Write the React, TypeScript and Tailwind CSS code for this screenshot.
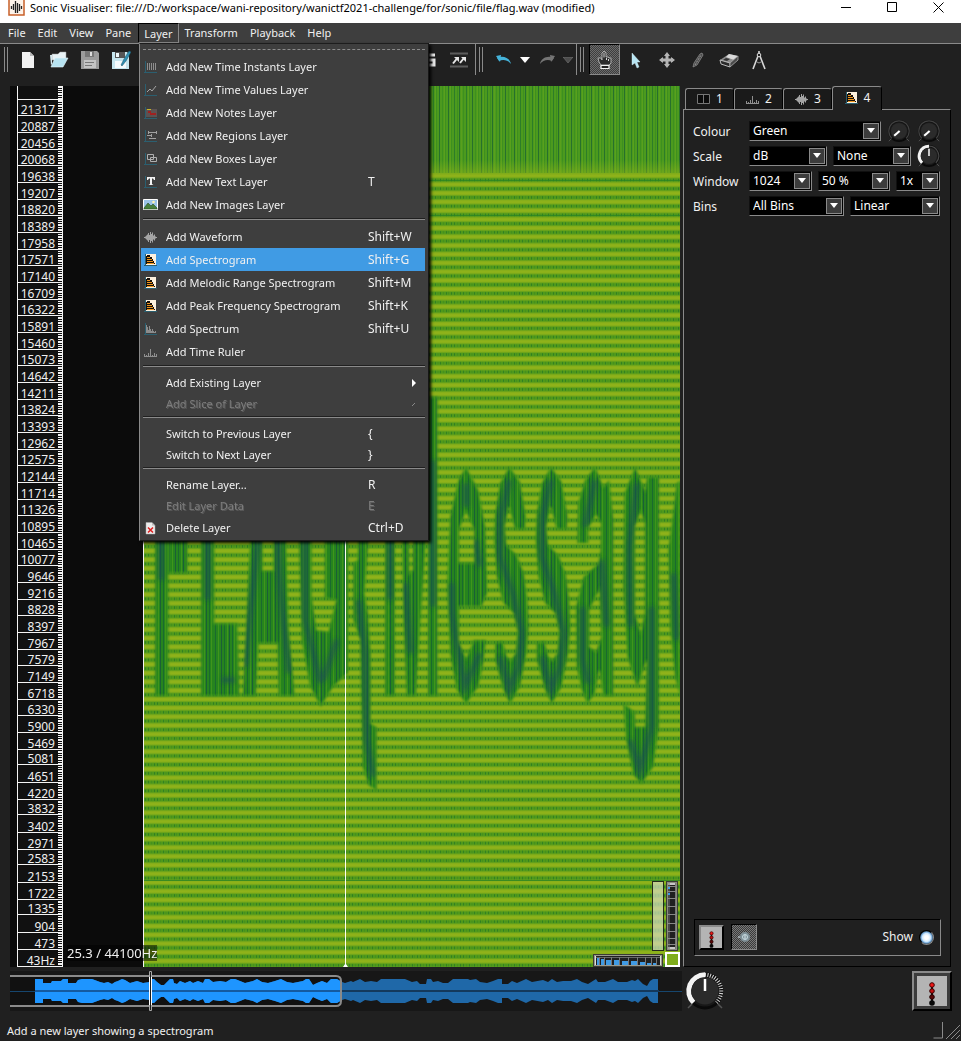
import React from "react";

/* ---------- data ---------- */

const frequencies = [
  21317, 20887, 20456, 20068, 19638, 19207, 18820, 18389, 17958, 17571, 17140, 16709, 16322, 15891, 15460, 15073,
  14642, 14211, 13824, 13393, 12962, 12575, 12144, 11714, 11326, 10895, 10465, 10077, 9646, 9216, 8828, 8397, 7967,
  7579, 7149, 6718, 6330, 5900, 5469, 5081, 4651, 4220, 3832, 3402, 2971, 2583, 2153, 1722, 1335, 904, 473, 43,
];

const envelope: [number, number][] = [
  [35, 12], [43, 12], [43, 8], [51, 8], [52, 10], [61, 10], [63, 12], [68, 12], [68, 8], [76, 8], [78, 11], [82, 12], [92, 12],
  [100, 9], [104, 8], [108, 9], [112, 7], [115, 9], [118, 10], [122, 12], [125, 11], [130, 8], [137, 10], [143, 8], [150, 9],
  [152, 12], [154, 12], [157, 9], [161, 6], [164, 6], [167, 9], [170, 12], [173, 12], [174, 8], [177, 7], [180, 10], [185, 8],
  [190, 10], [193, 8], [198, 10], [203, 8], [205, 12], [209, 12], [213, 9], [220, 10], [226, 9], [231, 12], [235, 12],
  [240, 10], [245, 8], [253, 10], [257, 12], [262, 9], [268, 8], [275, 10], [281, 12], [287, 9], [293, 8], [303, 10],
  [306, 12], [309, 12], [313, 6], [317, 8], [322, 10], [327, 8], [331, 12], [337, 12], [342, 9], [345, 8], [351, 10],
  [353, 9], [360, 12], [365, 9], [371, 10], [377, 9], [381, 12], [405, 12], [412, 9], [417, 10], [420, 7], [426, 7],
  [427, 12], [431, 12], [433, 9], [438, 10], [443, 8], [448, 8], [453, 12], [468, 12], [470, 11], [476, 12], [480, 9],
  [487, 8], [493, 10], [498, 12], [502, 12], [502, 7], [508, 7], [512, 10], [517, 8], [526, 12], [532, 9], [543, 11],
  [548, 9], [552, 12], [557, 9], [563, 10], [571, 10], [577, 12], [582, 9], [588, 7], [596, 12], [598, 9], [605, 9],
  [613, 12], [618, 9], [627, 9], [632, 11], [635, 10], [638, 12], [643, 7], [647, 5], [650, 10], [653, 12], [658, 12],
];

const wavePoints = [
  ...envelope.map(([x, h]) => `${x - 10},${20 - h}`),
  ...[...envelope].reverse().map(([x, h]) => `${x - 10},${20 + h}`),
].join(" ");

type IconName =
  | "instants" | "values" | "notes" | "regions" | "boxes" | "text" | "images"
  | "waveform" | "spectrogram" | "spectrum" | "ruler" | "delete";

type Entry =
  | "-"
  | { label: string; icon?: IconName; keys?: string; active?: boolean; disabled?: boolean; sub?: boolean };

const layerMenu: Entry[] = [
  { label: "Add New Time Instants Layer", icon: "instants" },
  { label: "Add New Time Values Layer", icon: "values" },
  { label: "Add New Notes Layer", icon: "notes" },
  { label: "Add New Regions Layer", icon: "regions" },
  { label: "Add New Boxes Layer", icon: "boxes" },
  { label: "Add New Text Layer", icon: "text", keys: "T" },
  { label: "Add New Images Layer", icon: "images" },
  "-",
  { label: "Add Waveform", icon: "waveform", keys: "Shift+W" },
  { label: "Add Spectrogram", icon: "spectrogram", keys: "Shift+G", active: true },
  { label: "Add Melodic Range Spectrogram", icon: "spectrogram", keys: "Shift+M" },
  { label: "Add Peak Frequency Spectrogram", icon: "spectrogram", keys: "Shift+K" },
  { label: "Add Spectrum", icon: "spectrum", keys: "Shift+U" },
  { label: "Add Time Ruler", icon: "ruler" },
  "-",
  { label: "Add Existing Layer", sub: true },
  { label: "Add Slice of Layer", sub: true, disabled: true },
  "-",
  { label: "Switch to Previous Layer", keys: "{" },
  { label: "Switch to Next Layer", keys: "}" },
  "-",
  { label: "Rename Layer...", keys: "R" },
  { label: "Edit Layer Data", keys: "E", disabled: true },
  { label: "Delete Layer", icon: "delete", keys: "Ctrl+D" },
];

/* ---------- icons ---------- */

const Axes = () => <path d="M2.5 2v12M1 13.5h13" stroke="#2b5f70" fill="none" />;

function LayerIcon({ name }: { name: IconName }) {
  return (
    <svg width="16" height="16" viewBox="0 0 16 16" className="shrink-0" aria-hidden="true">
      {name === "instants" && (
        <>
          <Axes />
          <path d="M4.500 4v7M6.500 4v7M8.500 4v7M10.500 4v7M12.500 4v7" stroke="#8d8d8d" />
        </>
      )}
      {name === "values" && (
        <>
          <Axes />
          <path d="M4 10l3-3 2 2 4-5" stroke="#a5a5a5" fill="none" />
        </>
      )}
      {name === "notes" && (
        <>
          <Axes />
          <path d="M3 4h11v8H3z" fill="#5c5252" />
          <path d="M4 4.500h4" stroke="#c9b52a" />
          <path d="M5 7h3M7 9h6" stroke="#a02020" strokeWidth="2" />
        </>
      )}
      {name === "regions" && (
        <>
          <Axes />
          <path d="M5 4.500h9M4 7.500h5M6 10.500h7M5.500 3v3M13.500 3v3M8.500 6v3" stroke="#a0a0a0" />
        </>
      )}
      {name === "boxes" && (
        <>
          <Axes />
          <path d="M4.500 3.500h6v5h-6zM7.500 6.500h6v4h-6z" stroke="#b0b0b0" fill="none" />
        </>
      )}
      {name === "text" && (
        <>
          <Axes />
          <path d="M4 3h8v3h-1l-1-1.500H9V10l1.500 1h-5L7 10V4.500H6L5 6H4z" fill="#f2f2f2" />
        </>
      )}
      {name === "images" && (
        <>
          <path d="M.5 2.500h14v10H.5z" fill="#9cc4e8" stroke="#fff" />
          <path d="M1 11l4-5 3 3 2-2 4 4v1H1z" fill="#47803c" stroke="#254a20" strokeWidth=".6" />
          <circle cx="10.500" cy="5" r="1.300" fill="#fff3b0" />
        </>
      )}
      {name === "waveform" && (
        <path d="M1.500 8v1M2.500 7.500v2M3.500 6.500v4M4.500 5.500v6M5.500 4v9M6.500 6v5M7.500 3v11M8.500 5v7M9.500 3.500v10M10.500 6.500v4M11.500 5.500v6M12.500 7.500v2M13.500 8v1" stroke="#a4a4a4" />
      )}
      {name === "spectrogram" && (
        <>
          <Axes />
          <path d="M3 2h10v11H3z" fill="#fdf1de" />
          <path d="M3 12V4h1V3h3v2h2v2h1v2h1v2h1v1z" fill="#17100a" />
          <path d="M4 5.500h3M4 7.500h5M4 9.500h6M4 11.500h7" stroke="#ef961c" />
        </>
      )}
      {name === "spectrum" && (
        <>
          <Axes />
          <path d="M3.500 4v8M4.500 6v6M5.500 9v3M6.500 5v7M7.500 8v4M8.500 10v2M9.500 8v4M10.500 10v2M11.500 11v1M12.500 10v2" stroke="#8c8c8c" />
        </>
      )}
      {name === "ruler" && (
        <path d="M1.500 10v3M3.500 11v2M5.500 9v4M7.500 5v8M9.500 11v2M11.500 9v4M13.500 10v3M1 12.500h13" stroke="#8f8f8f" />
      )}
      {name === "delete" && (
        <>
          <path d="M3 2.500h6l3 3V14H3z" fill="#ececec" stroke="#aaa" strokeWidth=".5" />
          <path d="M9 2.500v3h3z" fill="#bbb" />
          <path d="M5 7.500l5 5M10 7.500l-5 5" stroke="#dc2020" strokeWidth="1.600" />
        </>
      )}
    </svg>
  );
}

/* ---------- pieces ---------- */

function LayerMenu() {
  return (
    <div
      role="menu"
      className="absolute top-[43px] left-[139px] z-20 w-[290px] border border-[#1d1d1d] border-l-[#8a8a8a] border-r-[#161616] bg-[#3e3e3e] pb-px shadow-[2px_2px_3px_#000]"
    >
      <div className="mx-[3px] flex h-[11px] flex-col justify-center">
        <div className="border-t border-dashed border-[#8c8c8c]" />
      </div>
      {layerMenu.map((e, i) =>
        e === "-" ? (
          <div key={i} className="mx-[3px] flex h-[9px] items-start pt-[2px]" role="separator">
            <div className="h-[2px] w-full border-t border-b border-t-[#202020] border-b-[#8a8a8a]" />
          </div>
        ) : (
          <button
            key={i}
            role="menuitem"
            disabled={e.disabled}
            className={
              "mx-[1px] mr-[3px] flex w-[284px] items-center pl-[2px] text-left " +
              (e.icon ? "h-[23px] " : "h-[21px] ") +
              (e.active ? "bg-[#409be4] " : "") +
              (e.disabled ? "text-[#7d7d7d] [text-shadow:1px_1px_0_#5c5c5c]" : "text-[#f0f0f0]")
            }
          >
            <span className="w-[23px] shrink-0">{e.icon && <LayerIcon name={e.icon} />}</span>
            <span className="w-[202px] shrink-0 text-[11px] whitespace-nowrap">{e.label}</span>
            <span className="flex-1 whitespace-nowrap">{e.keys}</span>
            {e.sub && (
              <svg width="8" height="10" viewBox="0 0 8 10" className="mr-[7px]" aria-hidden="true">
                {e.disabled ? <path d="M2 7l3-3" stroke="#888" /> : <path d="M2 1v8l4-4z" fill="#fff" />}
              </svg>
            )}
          </button>
        ),
      )}
    </div>
  );
}

function Handle() {
  return (
    <span className="mt-[3px] flex h-[25px] w-[4px] shrink-0 justify-between border-x border-[#8a8a8a]" />
  );
}

function Tool({ label, children, on }: { label: string; children: React.ReactNode; on?: boolean }) {
  return (
    <button
      aria-label={label}
      className={
        "flex h-[31px] w-[31px] shrink-0 items-center justify-center " +
        (on
          ? "border border-t-black border-r-[#8a8a8a] border-b-[#8a8a8a] border-l-black bg-[#565656] bg-[repeating-conic-gradient(#6c6c6c_0_25%,#3e3e3e_0_50%)] bg-[length:2px_2px]"
          : "")
      }
    >
      <svg width="20" height="20" viewBox="0 0 20 20" className="shrink-0" aria-hidden="true">
        {children}
      </svg>
    </button>
  );
}

function Toolbar() {
  return (
    <div className="flex h-[33px] items-start bg-[#202020] pl-[4px]">
      <Handle />
      <div className="ml-[4px] flex">
        <Tool label="New session">
          <path d="M4 2h8l4 4v12H4z" fill="#f2f2f2" />
          <path d="M12 2v4h4z" fill="#b8b8b8" />
        </Tool>
        <Tool label="Open">
          <path d="M3 4h6l2-2h6v8H3z" fill="#e9f3f6" stroke="#999" strokeWidth=".5" />
          <path d="M1 5h2v9l-1 1z" fill="#d5e8ee" />
          <path d="M6 8h13l-5 9H2z" fill="#b7e3f1" stroke="#e6f7fb" strokeWidth=".6" />
        </Tool>
        <Tool label="Save">
          <path d="M1 1h16l2 2v16H1z" fill="#9c9c9c" />
          <path d="M5 1h9v6H5z" fill="#777" />
          <path d="M10 2h2v4h-2z" fill="#ddd" />
          <path d="M4 10h12v8H4z" fill="#c4c4c4" />
          <path d="M5 12.500h9M5 15.500h7" stroke="#777" />
        </Tool>
        <Tool label="Save as">
          <path d="M1 2h15l2 2v15H1z" fill="#c5e5ee" />
          <path d="M4 2h10v6H4z" fill="#555" />
          <path d="M5 3h3v4H5z" fill="#eef8fb" />
          <path d="M4 11h11v7H4z" fill="#f5fbfd" />
          <path d="M10 15l3-6 5-8 2 1-5 9-4 5z" fill="#2f8fb3" stroke="#1b4f63" strokeWidth=".5" />
        </Tool>
      </div>
      <div className="w-[276px] shrink-0" />
      <div className="flex">
        <Tool label="Solo">
          <path d="M17 5H8v5h8v5H5" fill="none" stroke="#e8e8e8" strokeWidth="3" />
        </Tool>
        <Tool label="Align" >
          <path d="M1 3.500h18M1 16.500h18" stroke="#5c5c5c" strokeWidth="2" />
          <path d="M4 13.500l4-5M11 13l4-5" fill="none" stroke="#e6e6e6" strokeWidth="2" />
          <path d="M5 7h5v5zM12 7h5v5z" fill="#e6e6e6" />
        </Tool>
      </div>
      <div className="ml-px flex border-l border-[#8a8a8a] pl-[3px]">
        <Handle />
        <div className="ml-[5px] flex">
          <Tool label="Undo">
            <path d="M3 8c6-3 13 0 14 6-3-4-8-5-12-3" fill="#45b3da" />
            <path d="M2 6l5-1-1 7z" fill="#45b3da" />
          </Tool>
          <button aria-label="Undo history" className="flex h-[31px] w-[12px] items-center justify-center">
            <svg width="10" height="6" viewBox="0 0 10 6"><path d="M0 0h10L5 6z" fill="#fff" /></svg>
          </button>
          <Tool label="Redo">
            <path d="M17 8C11 5 4 8 3 14c3-4 8-5 12-3" fill="#757575" />
            <path d="M18 6l-5-1 1 7z" fill="#757575" />
          </Tool>
          <button aria-label="Redo history" className="flex h-[31px] w-[12px] items-center justify-center">
            <svg width="10" height="6" viewBox="0 0 10 6"><path d="M0 0h10L5 6z" fill="#4c4c4c" stroke="#777" strokeWidth=".6" /></svg>
          </button>
        </div>
      </div>
      <div className="ml-[2px] flex border-l border-[#8a8a8a] pl-[3px]">
        <Handle />
        <div className="ml-[5px] flex">
          <Tool label="Navigate" on>
            <path d="M6 15l-2-3-1-4h3l1 2V3l2-2 2 2v4h2l1 1h2v5l-2 2z" fill="#2d2d2d" stroke="#c8c8c8" strokeWidth=".8" />
            <path d="M9 2.500v5M11.500 8v2M13.500 9v2" stroke="#e8e8e8" strokeWidth=".9" />
            <path d="M6 15.500h8v3H6z" fill="#222" stroke="#f3f3f3" strokeWidth="1.200" />
          </Tool>
          <Tool label="Select">
            <path d="M6 3v12l3-2 2 5 2-1-2-5h3z" fill="#b9e6f4" stroke="#d9f2f9" strokeWidth=".4" />
          </Tool>
          <Tool label="Edit">
            <path d="M10 4v12M4 10h12" stroke="#b4b4b4" strokeWidth="3" />
            <path d="M10 2l3 4H7zM10 18l3-4H7zM2 10l4-3v6zM18 10l-4-3v6z" fill="#b4b4b4" />
          </Tool>
          <Tool label="Draw">
            <path d="M5 17l1-4 6-9 2-1 1 2-6 10z" fill="#4a4a4a" stroke="#8a8a8a" strokeWidth=".8" />
            <path d="M7 15l6-10" stroke="#999" strokeDasharray="2 1" />
          </Tool>
          <Tool label="Erase">
            <path d="M1 10l9-6 9 2-8 8z" fill="#8d8d8d" />
            <path d="M10 4l9 2-4 4-8-3z" fill="#dadada" />
            <path d="M1 10l10 3v4L2 14z" fill="#2a2a2a" stroke="#bbb" />
            <path d="M11 13l8-7v4l-8 7z" fill="#4a4a4a" stroke="#aaa" strokeWidth=".8" />
            <path d="M4 10l3-2 4 1-3 2z" fill="#333" />
          </Tool>
          <Tool label="Measure">
            <path d="M9 1v3M8 6L3 19M10 6l5 13" fill="none" stroke="#d6d6d6" strokeWidth="1.600" />
            <path d="M7 12q2 2 4 0" fill="none" stroke="#999" />
            <circle cx="9" cy="5" r="1.800" fill="#222" stroke="#ddd" />
          </Tool>
        </div>
      </div>
    </div>
  );
}

function FrequencyScale() {
  const ticks = Array.from({ length: 512 }, (_, n) => 880 - Math.round(n * 1.7226));
  return (
    <svg viewBox="0 0 134 881" className="h-[881px] w-[134px] shrink-0 overflow-visible bg-[#0b0b0b]" shapeRendering="crispEdges">
      <rect x="7" y="0" width="46" height="881" fill="#111" />
      <path d="M7.500 0v881M52.500 0v881M7 13.500h46" stroke="#f4f4f4" />
      {ticks.map((y, i) => (
        <rect key={i} x="48" y={y} width="4" height="1" fill="#f4f4f4" />
      ))}
      {frequencies.map((f) => {
        const y = 880 - Math.round((f - 43) * 0.04);
        return (
          <g key={f}>
            <rect x="7" y={y} width="46" height="1" fill="#f4f4f4" />
            <text x="45" y={y - 1} textAnchor="end" fill="#f0f0f0" fontSize="12">
              {f === 43 ? "43Hz" : f}
            </text>
          </g>
        );
      })}
      <path d="M133.500 455v426" stroke="#f4f4f4" />
    </svg>
  );
}

const S_SHAPE =
  "M508 80L540 125 558 230 555 268 525 268 507 200 494 262 500 315 530 345 552 400 562 475 566 560 560 640 540 740 510 792 490 750 465 660 465 608 488 604 500 648 512 662 526 640 532 575 520 520 490 490 470 410 462 300 465 220 480 130Z";
const S_CORE = "M508 120L482 230 480 350 518 460 546 580 535 680 508 750 480 650";

function LettersA({ core }: { core?: boolean }) {
  return core ? (
    <g transform="translate(0 440) scale(.33333)">
      <path d="M483 290V420M623 290V480M665 720H705M775 300L750 520 735 680M835 300C835 480 860 600 868 700M915 290V540L962 730M970 720L1010 600" />
    </g>
  ) : (
    <g transform="translate(0 440) scale(.33333)">
      <path d="M465 240H505V768H465zM505 240H563V400H505z" />
      <path d="M603 240H643V550H712L718 768H603z" />
      <path fillRule="evenodd" d="M754 240H857L866 560 882 740 884 768H836L832 610H776L768 768H728L738 560 745 400zM788 240V392H820V240z" />
      <path d="M895 240H935V470L950 570 985 575 1008 480 974 475V240H1044V700L1000 740 962 800 930 740 905 600z" />
    </g>
  );
}

function LettersB({ core }: { core?: boolean }) {
  return core ? (
    <g transform="translate(340 440) scale(.33333)">
      <path d="M55 480L75 640 80 900 100 1010M150 300V480M195 430L212 640M278 60V500M378 130L378 200M335 430L335 520 375 740 420 640M405 300L420 380" />
      <path d={S_CORE} />
      <path d={S_CORE} transform="translate(125 0)" />
      <path d="M765 120L735 260M785 360L800 560M728 500L728 660 745 730M890 130L868 320 872 560M935 500V860L900 990 870 900M1000 400L1010 600" />
    </g>
  ) : (
    <g transform="translate(340 440) scale(.33333)">
      <path d="M57 240H90L80 380 74 460 84 520 92 640V850L110 862V1052L85 1035 68 980 60 600 40 540V370L52 360z" />
      <path d="M135 240H165V768H135zM185 240H205L208 400 218 390 220 240H262L240 560 228 768H200L190 540zM264 -130H293V768H264z" />
      <path fillRule="evenodd" d="M378 80L415 150 436 260 440 380 442 460 425 500H357V605L378 655 402 600H438L430 670 415 740 378 792 350 750 330 640 321 440 330 230 355 120zM378 215L357 270V368H402V270z" />
      <path d={S_SHAPE} />
      <path d={S_SHAPE} transform="translate(125 0)" />
      <path fillRule="evenodd" d="M765 80L790 140 808 120 820 240V768H790L778 690 765 760 742 792 725 750 710 680 708 500 730 410 775 370 782 330 783 250 768 225 745 265V310H712L714 190 735 120zM778 450L748 510V620L768 635 784 590z" />
      <path fillRule="evenodd" d="M885 80L915 150 922 110H957V860L940 980 905 1032 880 1005 858 900 850 790 884 815 886 860H915L920 660 892 745 862 650 850 440 853 160zM902 215L885 260V520L902 575 914 520V250z" />
      <path d="M1010 130L1022 120V775L1005 710 990 560 985 330z" />
    </g>
  );
}

function Spectrogram() {
  const darkRows = [0, 1, 20];
  return (
    <svg
      viewBox="144 86 536 881"
      preserveAspectRatio="none"
      className="h-[881px] w-full"
      role="img"
      aria-label="Spectrogram"
    >
      <defs>
        <pattern id="lines" x="144" y="0" width="33" height="8" patternUnits="userSpaceOnUse">
          <rect width="33" height="8" fill="#4c9a1e" />
          <path d="M1.500 0v8M4.500 0v8M10.500 0v8M16.500 0v8M22.500 0v8M28.500 0v8" stroke="#3d901f" />
          <path d="M7.500 0v8M18.500 0v8M31.500 0v8" stroke="#27702c" />
          <path d="M13.500 0v8M25.500 0v8" stroke="#2d7d28" />
          <path d="M3.500 0v8M9.500 0v8M20.500 0v8M27.500 0v8" stroke="#59a01d" />
        </pattern>
        <linearGradient id="stripe" x1="0" y1="0" x2="0" y2="1">
          <stop offset="0" stopColor="#559b1b" />
          <stop offset=".25" stopColor="#86ae1a" />
          <stop offset=".5" stopColor="#93b41a" />
          <stop offset=".75" stopColor="#86ae1a" />
          <stop offset="1" stopColor="#559b1b" />
        </linearGradient>
        <pattern id="rows" x="144" y="172.700" width="34" height="8.726" patternUnits="userSpaceOnUse">
          <rect width="34" height="8.726" fill="#4f991b" />
          <rect width="34" height="6" fill="url(#stripe)" />
          <path
            d="M1.500 6v2.400M4.500 6v2.400M10.500 6v2.400M13.500 6v2.400M19.500 6v2.400M24.500 6v2.400M30.500 6v2.400"
            stroke="#2f7f22"
          />
          <path d="M7.500 6v2.400M16.500 6v2.400M22 6v2.400M27.500 6v2.400M32.500 6v2.400" stroke="#44901f" />
        </pattern>
        <pattern id="ink" x="144" y="0" width="23" height="8" patternUnits="userSpaceOnUse">
          <rect width="23" height="8" fill="#26841e" />
          <path d="M2.500 0v8M11.500 0v8M19.500 0v8" stroke="#1a6a2e" />
          <path d="M5.500 0v8M14.500 0v8M21.500 0v8" stroke="#3f951c" />
          <path d="M8.500 0v8M16.500 0v8" stroke="#1b5f36" />
        </pattern>
        <filter id="soft" x="-5%" y="-5%" width="110%" height="110%"><feGaussianBlur stdDeviation="0.800" /></filter>
        <filter id="softer" x="-5%" y="-5%" width="110%" height="110%"><feGaussianBlur stdDeviation="2.200" /></filter>
        <linearGradient id="fade" x1="0" y1="0" x2="0" y2="1">
          <stop offset="0" stopColor="#93b41a" stopOpacity="0" />
          <stop offset="1" stopColor="#93b41a" stopOpacity=".5" />
        </linearGradient>
        <mask id="letters" maskUnits="userSpaceOnUse" x="144" y="86" width="536" height="881">
          <g fill="#fff" filter="url(#soft)"><LettersA /><LettersB /></g>
        </mask>
      </defs>
      <rect x="144" y="172" width="536" height="795" fill="url(#rows)" />
      <rect x="144" y="86" width="536" height="87" fill="url(#lines)" />
      <rect x="144" y="160" width="536" height="14" fill="url(#fade)" />
      {darkRows.map((n) => (
        <rect key={n} x="144" y={180 + n * 35} width="536" height="1" fill="#2b8524" opacity=".8" />
      ))}
      <g mask="url(#letters)">
        <rect x="144" y="300" width="536" height="500" fill="url(#ink)" />
        <g fill="none" stroke="#4a9c1b" strokeWidth="8" opacity=".6" filter="url(#soft)">
          <LettersA />
          <LettersB />
        </g>
        <g fill="none" stroke="#1d5350" strokeWidth="18" opacity=".7" filter="url(#softer)">
          <LettersA core />
          <LettersB core />
        </g>
      </g>
      <path d="M345.500 541v426" stroke="#fafff0" />
      <path d="M343 967l2-3h1l2 3z" fill="#fff" />
    </svg>
  );
}

function Thumbwheels() {
  const cols: [number, number, number][] = [[4, 2, 7], [8, 3, 6], [13, 5, 5], [21, 5, 5], [29, 6, 4], [38, 6, 4], [47, 5, 3], [54, 4, 2], [60, 3, 2]];
  const rows = [5, 10, 17, 25, 33, 42, 50, 57, 63];
  return (
    <div className="absolute right-0 bottom-0 grid grid-cols-[70px_16px] items-end justify-items-end gap-x-[1px] gap-y-[1px]">
      <div className="col-span-2 flex gap-[2px]">
        <div className="h-[70px] w-[12px] border border-black/80 bg-[#d7dcc0]/70" />
        <svg width="14" height="70" viewBox="0 0 14 70" aria-hidden="true">
          <rect x=".5" y=".5" width="11" height="69" fill="#8b8b80" stroke="#3b3b35" />
          <rect x="2" y="2" width="8" height="66" fill="#202020" />
          <path d="M2 3h8M2 67h8" stroke="#c8c8c8" strokeWidth="2" />
          <path d="M3 2v66M9.500 2v66" stroke="#777" />
          {rows.map((y) => <path key={y} d={`M2 ${y}.500h8`} stroke="#888" strokeWidth="1" />)}
          <path d="M3 6v2M3 12v2" stroke="#409be4" strokeWidth="2" />
        </svg>
      </div>
      <svg width="70" height="13" viewBox="0 0 70 13" aria-hidden="true">
        <rect x=".5" y=".5" width="69" height="12" fill="#9a9a8e" stroke="#3b3b35" />
        <rect x="2" y="2" width="66" height="9" fill="#202020" />
        <path d="M3 3.500h64" stroke="#666" />
        {cols.map(([x, w, h]) => (
          <g key={x}>
            <rect x={x} y={11 - h} width={w} height={h} fill="#409be4" />
            <path d={`M${x + w}.500 3v8`} stroke="#777" />
          </g>
        ))}
        <path d="M2.500 2v9M67.500 2v9" stroke="#ddd" />
      </svg>
      <div className="h-[15px] w-[15px] border-2 border-white bg-[#7fac1b]" />
    </div>
  );
}

function Knob({ size, level }: { size: "sm" | "lg"; level: "low" | "mid" }) {
  const px = size === "sm" ? 24 : 40;
  return (
    <svg width={px} height={px} viewBox="0 0 40 40" className="shrink-0" aria-hidden="true">
      <circle cx="20" cy="20" r="17" fill="#181818" stroke="#0a0a0a" strokeWidth="3" />
      {level === "mid" && (
        <>
          <path d="M8.500 31.500A16.300 16.300 0 0 1 20 3.700" fill="none" stroke="#f4f4f4" strokeWidth="5" />
          <path d="M20 3.700A16.300 16.300 0 0 1 31.500 31.500" fill="none" stroke={size === "lg" ? "#d8d8d8" : "#484848"} strokeWidth={size === "lg" ? 4 : 2} strokeDasharray={size === "lg" ? "1 1.500" : undefined} />
        </>
      )}
      {level === "low" && <path d="M8 32A17 17 0 1 1 32 32" fill="none" stroke="#414141" strokeWidth="2" />}
      <circle cx="20" cy="20" r="13.500" fill="#2b2b2b" />
      <path d="M7 33l-4 4M33 33l4 4" stroke="#555" strokeWidth="1.500" />
      {level === "mid" ? (
        <path d="M20 8v12" stroke="#fff" strokeWidth="2.500" />
      ) : (
        <path d="M21 20l-9 8" stroke="#fff" strokeWidth="3.500" />
      )}
    </svg>
  );
}

function Picker({ label, value, className }: { label: string; value: string; className: string }) {
  return (
    <div className={"relative h-[20px] border border-t-[#101010] border-r-[#8a8a8a] border-b-[#8a8a8a] border-l-[#101010] bg-black " + className}>
      <select aria-label={label} defaultValue={value} className="block h-full w-full appearance-none bg-transparent pl-[3px] text-white outline-none">
        <option>{value}</option>
      </select>
      <span className="pointer-events-none absolute top-[1px] right-[1px] flex h-[16px] w-[16px] items-center justify-center border border-[#8a8a8a] bg-[#3c3c3c]">
        <svg width="8" height="5" viewBox="0 0 8 5"><path d="M0 0h8L4 5z" fill="#fff" /></svg>
      </span>
    </div>
  );
}

function Row({ label, children }: { label: string; children: React.ReactNode }) {
  return (
    <div className="flex h-[25px] items-center">
      <span className="w-[56px] shrink-0 pt-[2px]">{label}</span>
      <div className="flex flex-1 items-center gap-[6px]">{children}</div>
    </div>
  );
}

function Lights({ size }: { size: number }) {
  return (
    <svg width={size} height={size} viewBox="0 0 30 30" aria-hidden="true">
      <rect width="30" height="30" fill="#b4b4b4" />
      <path d="M15 9v18" stroke="#111" strokeWidth="2" />
      <circle cx="15" cy="9" r="2.300" fill="#f01818" stroke="#400" />
      <circle cx="15" cy="15" r="2.300" fill="#c41010" stroke="#300" />
      <circle cx="15" cy="21" r="2.300" fill="#5c0808" stroke="#200" />
      <circle cx="15" cy="27" r="2.800" fill="#080808" />
    </svg>
  );
}

function Tab({ n, active, children }: { n: number; active?: boolean; children: React.ReactNode }) {
  return (
    <button
      role="tab"
      aria-selected={!!active}
      className={
        "flex items-center justify-center gap-[4px] rounded-t-[3px] border border-b-0 border-t-[#8a8a8a] border-r-black border-l-[#8a8a8a] " +
        (active ? "relative z-10 -mb-px h-[24px] w-[50px] bg-[#202020] pb-[2px]" : "h-[21px] w-[49px] bg-[#1a1a1a]")
      }
    >
      {children}
      <span>{n}</span>
    </button>
  );
}

function PropertyPanel() {
  return (
    <aside className="flex w-[268px] shrink-0 flex-col">
      <div role="tablist" className="flex h-[23px] items-end pl-[2px]">
        <Tab n={1}>
          <svg width="16" height="16" viewBox="0 0 16 16"><path d="M1.500 3.500h12v9h-12zM7.500 3v10" fill="#0c0c0c" stroke="#777" /></svg>
        </Tab>
        <Tab n={2}><LayerIcon name="ruler" /></Tab>
        <Tab n={3}><LayerIcon name="waveform" /></Tab>
        <Tab n={4} active><LayerIcon name="spectrogram" /></Tab>
      </div>
      <div className="flex flex-1 flex-col border border-t-[#8a8a8a] border-r-black border-b-black border-l-[#8a8a8a] px-[9px] pt-[8px] pb-[10px]">
        <Row label="Colour">
          <Picker label="Colour" value="Green" className="w-[132px]" />
          <Knob size="sm" level="low" />
          <Knob size="sm" level="low" />
        </Row>
        <Row label="Scale">
          <Picker label="Scale" value="dB" className="w-[78px]" />
          <Picker label="Normalisation" value="None" className="w-[78px]" />
          <Knob size="sm" level="mid" />
        </Row>
        <Row label="Window">
          <Picker label="Window size" value="1024" className="w-[63px]" />
          <Picker label="Window overlap" value="50 %" className="w-[72px]" />
          <Picker label="Oversampling" value="1x" className="w-[44px]" />
        </Row>
        <Row label="Bins">
          <Picker label="Bins" value="All Bins" className="w-[95px]" />
          <Picker label="Frequency scale" value="Linear" className="w-[90px]" />
        </Row>
        <div className="mt-auto ml-px flex h-[37px] items-center border border-t-black border-r-[#8a8a8a] border-b-[#8a8a8a] border-l-black px-[4px] pb-px">
          <button aria-label="Levels" className="border-2 border-t-[#8a8a8a] border-r-black border-b-black border-l-[#8a8a8a] bg-[#b4b4b4]">
            <Lights size={21} />
          </button>
          <button aria-label="Play settings" className="ml-[7px] flex h-[26px] w-[26px] items-center justify-center border border-t-black border-r-[#8a8a8a] border-b-[#8a8a8a] border-l-black bg-[repeating-conic-gradient(#787878_0_25%,#3a3a3a_0_50%)] bg-[length:2px_2px]">
            <svg width="14" height="14" viewBox="0 0 14 14" aria-hidden="true">
              <circle cx="8" cy="7" r="5" fill="#7f9097" />
              <circle cx="8" cy="7" r="2.500" fill="none" stroke="#c9dde3" />
              <path d="M8 5v4M1 7h2" stroke="#dcebf0" strokeWidth="1" />
            </svg>
          </button>
          <label htmlFor="show" className="ml-auto">Show</label>
          <input
            id="show"
            type="radio"
            defaultChecked
            className="mr-[2px] ml-[6px] h-[15px] w-[15px] appearance-none rounded-full border border-t-black border-r-[#8a8a8a] border-b-[#8a8a8a] border-l-black bg-[radial-gradient(#ffffff_0_20%,#cfe9ff_45%,#6fa5d6_60%,#1c2a36_75%)]"
          />
        </div>
      </div>
    </aside>
  );
}

function Overview() {
  return (
    <svg viewBox="0 0 672 40" preserveAspectRatio="none" className="h-[40px] min-w-0 flex-1 bg-[#171717]" role="img" aria-label="Waveform overview">
      <defs>
        <clipPath id="visible"><rect x="0" y="0" width="331" height="40" /></clipPath>
      </defs>
      <rect x="0" y="4" width="331" height="32" fill="#111" />
      <path d="M0 20.500h672" stroke="#16466e" />
      <polygon points={wavePoints} fill="#1f68a8" />
      <polygon points={wavePoints} fill="#1e95ff" clipPath="url(#visible)" />
      <path d="M25 20h306" stroke="#145aa0" strokeWidth="2" />
      <path d="M331 20h318" stroke="#14395c" strokeWidth="2" />
      <path d="M0 5h326q5 0 5 5v20q0 5-5 5H0" fill="none" stroke="#8a8a8a" strokeWidth="2" />
      <path d="M139.500.500h2v39h-2z" fill="#1a1a1a" stroke="#a8a8a8" />
      <path d="M139.500 6v28M141.500 6v28" stroke="#fff" />
    </svg>
  );
}

export default function App() {
  return (
    <div className="relative flex min-h-screen flex-col overflow-hidden bg-[#202020] font-['Noto_Sans','Open_Sans',sans-serif] text-[12px] leading-4 text-[#f0f0f0]">
      <header className="flex h-[23px] items-start bg-white pl-[8px] text-black">
        <svg width="17" height="16" viewBox="0 0 17 16" aria-hidden="true">
          <path d="M1 -1h15v16H1z" fill="#fdf3ea" stroke="#c8602a" strokeWidth="1.500" />
          <path d="M3.500 6v3M5.500 4v6M7.500 1v12M9.500 3v10M11.500 4v7M13.500 6v3" stroke="#222" strokeWidth="1.300" />
        </svg>
        <h1 className="ml-[5px] flex-1 text-[11px] whitespace-nowrap">
          Sonic Visualiser: file:///D:/workspace/wani-repository/wanictf2021-challenge/for/sonic/file/flag.wav (modified)
        </h1>
        <div className="flex">
          <button aria-label="Minimise" className="flex h-[15px] w-[45px] items-center justify-center">
            <svg width="11" height="11" viewBox="0 0 11 11"><path d="M0 5.500h10" stroke="#000" /></svg>
          </button>
          <button aria-label="Maximise" className="flex h-[15px] w-[46px] items-center justify-center">
            <svg width="11" height="11" viewBox="0 0 11 11"><path d="M.5.500h9v9h-9z" fill="none" stroke="#000" /></svg>
          </button>
          <button aria-label="Close" className="flex h-[15px] w-[46px] items-center justify-center">
            <svg width="11" height="11" viewBox="0 0 11 11"><path d="M.5.500l10 10M10.500.500l-10 10" stroke="#000" /></svg>
          </button>
        </div>
      </header>

      <nav className="flex h-[21px] items-stretch border-b border-[#8a8a8a] bg-[#3e3e3e] pl-[2px] text-[11px]">
        {["File", "Edit", "View", "Pane", "Layer", "Transform", "Playback", "Help"].map((m) => (
          <button
            key={m}
            className={
              m === "Layer"
                ? "ml-px border border-t-black border-r-[#8a8a8a] border-b-[#8a8a8a] border-l-black px-[5px] pt-px"
                : "px-[6px]"
            }
          >
            {m}
          </button>
        ))}
      </nav>
      <LayerMenu />

      <Toolbar />

      <main className="mt-[9px] flex flex-1 gap-[3px] pr-[10px] pl-[10px]">
        <section className="relative flex min-w-0 flex-1">
          <FrequencyScale />
          <Spectrogram />
          <span className="absolute bottom-[6px] left-[57px] bg-black/50 text-[13px] leading-4 whitespace-nowrap">25.3 / 44100Hz</span>
          <Thumbwheels />
        </section>
        <PropertyPanel />
      </main>

      <section className="mt-[4px] flex h-[40px] pr-[9px] pl-[10px]">
        <Overview />
        <div className="ml-[3px] flex w-[227px] items-center">
          <Knob size="lg" level="mid" />
        </div>
        <button aria-label="Output levels" className="flex h-[40px] w-[40px] items-center justify-center border-2 border-t-[#8a8a8a] border-r-black border-b-black border-l-[#8a8a8a] bg-[#3c3c3c]">
          <Lights size={30} />
        </button>
      </section>

      <footer className="flex h-[30px] items-end justify-between pb-[2px] pl-[7px]">
        <p className="text-[11px] whitespace-nowrap">Add a new layer showing a spectrogram</p>
        <svg width="29" height="18" viewBox="0 0 29 18" aria-hidden="true">
          <path d="M10.500 1v16h-9M28 4L14 18M28 9l-9 9M28 14l-4 4" fill="none" stroke="#8a8a8a" />
        </svg>
      </footer>
    </div>
  );
}
